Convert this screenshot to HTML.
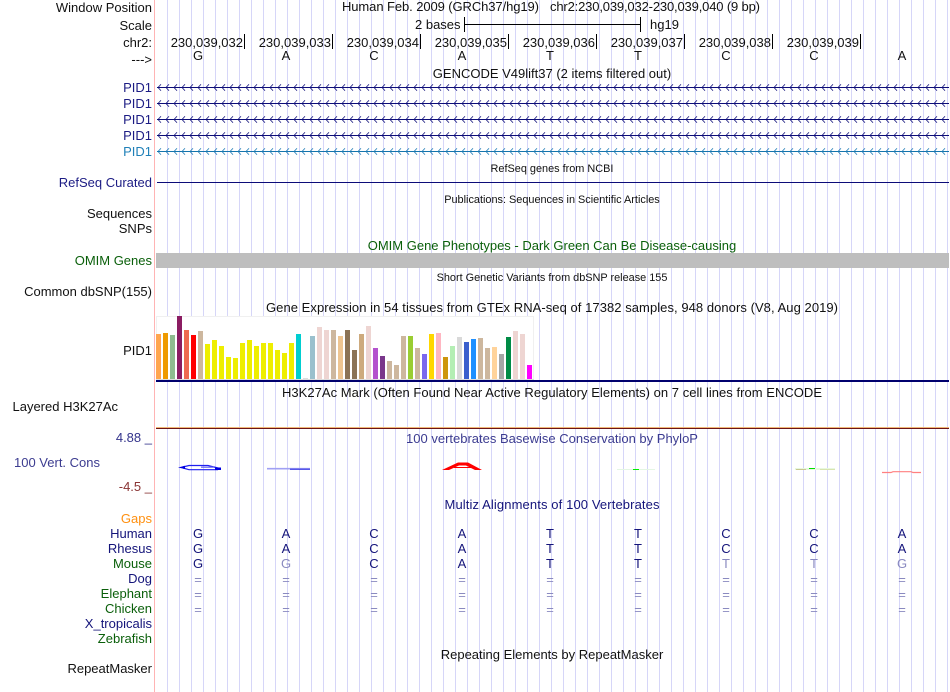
<!DOCTYPE html>
<html><head><meta charset="utf-8"><style>
html,body{margin:0;padding:0;background:#fff;width:950px;height:692px;overflow:hidden}
svg{display:block;font-family:"Liberation Sans",sans-serif;font-size:13px}
.r{text-anchor:end}.m{text-anchor:middle}.s{font-size:10.9px}
.n{fill:#14147a}.g{fill:#0a5f0a}.k{fill:#111}.f{fill:#8a8ac0}
</style></head><body>
<svg width="950" height="692" viewBox="0 0 950 692" xmlns="http://www.w3.org/2000/svg">
<defs>
<pattern id="chev" x="157" y="84" width="8" height="7" patternUnits="userSpaceOnUse"><path d="M4,0.3 L1,3.5 L4,6.7" fill="none" stroke="#0c0c78" stroke-width="0.85" opacity="0.9"/></pattern>
<pattern id="chev2" x="157" y="148" width="8" height="7" patternUnits="userSpaceOnUse"><path d="M4,0.3 L1,3.5 L4,6.7" fill="none" stroke="#1878b4" stroke-width="0.85" opacity="0.9"/></pattern>
</defs>
<path d="M167,346H948" stroke="#d6d6f8" stroke-width="692" stroke-dasharray="1 11" fill="none" shape-rendering="crispEdges"/>
<rect x="154" y="0" width="1" height="692" fill="#ffb4b4"/>

<!-- header -->
<g class="k">
<text x="152" y="12" class="r">Window Position</text>
<text x="152" y="30" class="r">Scale</text>
<text x="152" y="47" class="r">chr2:</text>
<text x="152" y="64" class="r">---&gt;</text>
<text x="342" y="11" textLength="197">Human Feb. 2009 (GRCh37/hg19)</text>
<text x="550" y="11" textLength="210">chr2:230,039,032-230,039,040 (9 bp)</text>
<text x="415" y="29">2 bases</text>
<text x="650" y="29">hg19</text>
<text x="243" y="47" class="r">230,039,032</text>
<text x="331" y="47" class="r">230,039,033</text>
<text x="419" y="47" class="r">230,039,034</text>
<text x="507" y="47" class="r">230,039,035</text>
<text x="595" y="47" class="r">230,039,036</text>
<text x="683" y="47" class="r">230,039,037</text>
<text x="771" y="47" class="r">230,039,038</text>
<text x="859" y="47" class="r">230,039,039</text>
<text x="198" y="60" class="m">G</text><text x="286" y="60" class="m">A</text><text x="374" y="60" class="m">C</text><text x="462" y="60" class="m">A</text><text x="550" y="60" class="m">T</text><text x="638" y="60" class="m">T</text><text x="726" y="60" class="m">C</text><text x="814" y="60" class="m">C</text><text x="902" y="60" class="m">A</text>
<text x="552" y="78" class="m">GENCODE V49lift37 (2 items filtered out)</text>
</g>
<g fill="#000" shape-rendering="crispEdges">
<rect x="464" y="17" width="1" height="15"/><rect x="465" y="24" width="175" height="1"/><rect x="640" y="17" width="1" height="15"/>
<rect x="244" y="34" width="1" height="15"/><rect x="332" y="34" width="1" height="15"/><rect x="420" y="34" width="1" height="15"/><rect x="508" y="34" width="1" height="15"/><rect x="596" y="34" width="1" height="15"/><rect x="684" y="34" width="1" height="15"/><rect x="772" y="34" width="1" height="15"/><rect x="860" y="34" width="1" height="15"/>
</g>

<!-- genes -->
<text x="152" y="92" class="r" fill="#1c1c84">PID1</text>
<text x="152" y="108" class="r" fill="#1c1c84">PID1</text>
<text x="152" y="124" class="r" fill="#1c1c84">PID1</text>
<text x="152" y="140" class="r" fill="#1c1c84">PID1</text>
<text x="152" y="156" class="r" fill="#2080b8">PID1</text>
<g fill="#0c0c78" shape-rendering="crispEdges"><rect x="157" y="87" width="792" height="1"/><rect x="157" y="103" width="792" height="1"/><rect x="157" y="119" width="792" height="1"/><rect x="157" y="135" width="792" height="1"/></g>
<rect x="157" y="151" width="792" height="1" fill="#1474ac" shape-rendering="crispEdges"/>
<rect x="157" y="84" width="792" height="7" fill="url(#chev)"/>
<g transform="translate(0,16)"><rect x="157" y="84" width="792" height="7" fill="url(#chev)"/></g>
<g transform="translate(0,32)"><rect x="157" y="84" width="792" height="7" fill="url(#chev)"/></g>
<g transform="translate(0,48)"><rect x="157" y="84" width="792" height="7" fill="url(#chev)"/></g>
<rect x="157" y="148" width="792" height="7" fill="url(#chev2)"/>

<!-- mid -->
<text x="552" y="172" class="m s k">RefSeq genes from NCBI</text>
<text x="152" y="187" class="r" fill="#1c1c84">RefSeq Curated</text>
<rect x="157" y="182" width="792" height="1" fill="#0c0c78" shape-rendering="crispEdges"/>
<text x="552" y="203" class="m s k">Publications: Sequences in Scientific Articles</text>
<text x="152" y="218" class="r k">Sequences</text>
<text x="152" y="233" class="r k">SNPs</text>
<text x="552" y="250" class="m" fill="#0a5f0a">OMIM Gene Phenotypes - Dark Green Can Be Disease-causing</text>
<text x="152" y="265" class="r g">OMIM Genes</text>
<rect x="156" y="253" width="793" height="15" fill="#bebebe"/>
<text x="552" y="281" class="m s k">Short Genetic Variants from dbSNP release 155</text>
<text x="152" y="296" class="r k">Common dbSNP(155)</text>
<text x="552" y="312" class="m k" textLength="572">Gene Expression in 54 tissues from GTEx RNA-seq of 17382 samples, 948 donors (V8, Aug 2019)</text>
<text x="152" y="355" class="r k">PID1</text>

<!-- GTEx -->
<rect x="156" y="316" width="378" height="64" fill="#fff"/>
<path d="M156.5,380V316.5H533.5V380" fill="none" stroke="#f0f0f0"/>
<g shape-rendering="crispEdges">
<rect x="156" y="334" width="5" height="45" fill="#FFA54F"/><rect x="163" y="333" width="5" height="46" fill="#EE9A00"/><rect x="170" y="335" width="5" height="44" fill="#8FBC8F"/><rect x="177" y="316" width="5" height="63" fill="#8B1C62"/><rect x="184" y="330" width="5" height="49" fill="#EE6A50"/><rect x="191" y="335" width="5" height="44" fill="#FF0000"/><rect x="198" y="331" width="5" height="48" fill="#CDB79E"/>
<g fill="#EEEE00"><rect x="205" y="344" width="5" height="35"/><rect x="212" y="340" width="5" height="39"/><rect x="219" y="346" width="5" height="33"/><rect x="226" y="357" width="5" height="22"/><rect x="233" y="358" width="5" height="21"/><rect x="240" y="343" width="5" height="36"/><rect x="247" y="340" width="5" height="39"/><rect x="254" y="346" width="5" height="33"/><rect x="261" y="343" width="5" height="36"/><rect x="268" y="343" width="5" height="36"/><rect x="275" y="350" width="5" height="29"/><rect x="282" y="353" width="5" height="26"/><rect x="289" y="343" width="5" height="36"/></g>
<rect x="296" y="334" width="5" height="45" fill="#00CED1"/>
<rect x="303" y="378" width="5" height="1" fill="#dddddd"/>
<rect x="310" y="336" width="5" height="43" fill="#9AC0CD"/><rect x="317" y="327" width="5" height="52" fill="#EED5D2"/><rect x="324" y="330" width="5" height="49" fill="#EED5D2"/><rect x="331" y="330" width="5" height="49" fill="#CDB79E"/><rect x="338" y="336" width="5" height="43" fill="#EEC591"/><rect x="345" y="330" width="5" height="49" fill="#8B7355"/><rect x="352" y="350" width="5" height="29" fill="#8B7355"/><rect x="359" y="334" width="5" height="45" fill="#CDAA7D"/><rect x="366" y="326" width="5" height="53" fill="#EED5D2"/><rect x="373" y="348" width="5" height="31" fill="#B452CD"/><rect x="380" y="356" width="5" height="23" fill="#7A378B"/><rect x="387" y="361" width="5" height="18" fill="#CDB79E"/><rect x="394" y="365" width="5" height="14" fill="#CDB79E"/><rect x="401" y="336" width="5" height="43" fill="#CDB79E"/><rect x="408" y="336" width="5" height="43" fill="#9ACD32"/><rect x="415" y="348" width="5" height="31" fill="#CDB79E"/><rect x="422" y="354" width="5" height="25" fill="#7B68EE"/><rect x="429" y="334" width="5" height="45" fill="#FFD700"/><rect x="436" y="333" width="5" height="46" fill="#FFB6C1"/><rect x="443" y="357" width="5" height="22" fill="#CD950C"/><rect x="450" y="346" width="5" height="33" fill="#B4EEB4"/><rect x="457" y="337" width="5" height="42" fill="#D9D9D9"/><rect x="464" y="342" width="5" height="37" fill="#3A5FCD"/><rect x="471" y="339" width="5" height="40" fill="#1E90FF"/><rect x="478" y="338" width="5" height="41" fill="#CDB79E"/><rect x="485" y="348" width="5" height="31" fill="#CDB79E"/><rect x="492" y="347" width="5" height="32" fill="#FFD39B"/><rect x="499" y="354" width="5" height="25" fill="#A6A6A6"/><rect x="506" y="337" width="5" height="42" fill="#008B45"/><rect x="513" y="331" width="5" height="48" fill="#EED5D2"/><rect x="520" y="334" width="5" height="45" fill="#EED5D2"/><rect x="527" y="365" width="5" height="14" fill="#FF00FF"/>
<rect x="156" y="379" width="378" height="1" fill="#dddddd"/>
<rect x="156" y="380" width="793" height="2" fill="#00006e"/>
</g>

<!-- H3K27Ac -->
<text x="552" y="397" class="m k" textLength="540">H3K27Ac Mark (Often Found Near Active Regulatory Elements) on 7 cell lines from ENCODE</text>
<text x="118" y="411" class="r k">Layered H3K27Ac</text>
<rect x="156" y="427" width="793" height="1" fill="#f0b878" shape-rendering="crispEdges"/>
<rect x="156" y="428" width="793" height="1" fill="#6e1414" shape-rendering="crispEdges"/>

<!-- conservation -->
<text x="552" y="443" class="m" fill="#3c3c90">100 vertebrates Basewise Conservation by PhyloP</text>
<text x="152" y="442" class="r" fill="#34348c">4.88 _</text>
<text x="14" y="467" fill="#3c3c90">100 Vert. Cons</text>
<text x="152" y="491" class="r" fill="#8a3434">-4.5 _</text>

<path d="M183,467 L189,465.5 H208 L220,468.5 M183,468 L189,469.7 H218" fill="none" stroke="#2020f0" stroke-width="1.2"/>
<path d="M201,467.2 H214" fill="none" stroke="#6868f4" stroke-width="1.2"/>
<path d="M178,467.5 L185,465.8 V469 Z" fill="#0000e0"/>
<rect x="215" y="467.5" width="6" height="2.5" fill="#0000e0"/>
<path d="M267,468.7 H310" stroke="#a0a0f4" stroke-width="1.6" fill="none"/>
<path d="M290,469.2 H310" stroke="#2020e0" stroke-width="1" fill="none"/>
<path d="M442,470 L458,462.5 H468 L482,470 H475 L466,465.5 H459 L449,470 Z" fill="#ff0000"/>
<path d="M454,467.5 H471" stroke="#ff0000" stroke-width="1" fill="none"/>
<rect x="617" y="469" width="38" height="1" fill="#e4f6e4"/>
<rect x="633" y="469" width="6" height="1" fill="#00ee00"/>
<rect x="795" y="468" width="40" height="2" fill="#e8f8e0"/>
<rect x="796" y="469" width="10" height="1" fill="#c8c890"/>
<rect x="820" y="469" width="15" height="1" fill="#d8e4b0"/>
<rect x="809" y="468" width="6" height="1" fill="#00e000"/>
<path d="M882,472.5 H891 L893,471.7 H911 L913,472.5 H921" stroke="#ff8080" stroke-width="1.2" fill="none"/>

<!-- multiz -->
<text x="552" y="509" class="m" fill="#14147a" textLength="215">Multiz Alignments of 100 Vertebrates</text>
<text x="152" y="523" class="r" fill="#ff9010">Gaps</text>
<text x="152" y="538" class="r n">Human</text>
<text x="152" y="553" class="r n">Rhesus</text>
<text x="152" y="568" class="r g">Mouse</text>
<text x="152" y="583" class="r n">Dog</text>
<text x="152" y="598" class="r g">Elephant</text>
<text x="152" y="613" class="r g">Chicken</text>
<text x="152" y="628" class="r n">X_tropicalis</text>
<text x="152" y="643" class="r g">Zebrafish</text>
<text x="152" y="673" class="r k">RepeatMasker</text>
<text x="552" y="659" class="m k">Repeating Elements by RepeatMasker</text>

<g class="n">
<text x="198" y="538" class="m">G</text><text x="286" y="538" class="m">A</text><text x="374" y="538" class="m">C</text><text x="462" y="538" class="m">A</text><text x="550" y="538" class="m">T</text><text x="638" y="538" class="m">T</text><text x="726" y="538" class="m">C</text><text x="814" y="538" class="m">C</text><text x="902" y="538" class="m">A</text>
<text x="198" y="553" class="m">G</text><text x="286" y="553" class="m">A</text><text x="374" y="553" class="m">C</text><text x="462" y="553" class="m">A</text><text x="550" y="553" class="m">T</text><text x="638" y="553" class="m">T</text><text x="726" y="553" class="m">C</text><text x="814" y="553" class="m">C</text><text x="902" y="553" class="m">A</text>
<text x="198" y="568" class="m">G</text><text x="374" y="568" class="m">C</text><text x="462" y="568" class="m">A</text><text x="550" y="568" class="m">T</text><text x="638" y="568" class="m">T</text>
</g>
<g class="f">
<text x="286" y="568" class="m">G</text><text x="726" y="568" class="m">T</text><text x="814" y="568" class="m">T</text><text x="902" y="568" class="m">G</text>
<text x="198" y="584" class="m">=</text><text x="286" y="584" class="m">=</text><text x="374" y="584" class="m">=</text><text x="462" y="584" class="m">=</text><text x="550" y="584" class="m">=</text><text x="638" y="584" class="m">=</text><text x="726" y="584" class="m">=</text><text x="814" y="584" class="m">=</text><text x="902" y="584" class="m">=</text>
<text x="198" y="599" class="m">=</text><text x="286" y="599" class="m">=</text><text x="374" y="599" class="m">=</text><text x="462" y="599" class="m">=</text><text x="550" y="599" class="m">=</text><text x="638" y="599" class="m">=</text><text x="726" y="599" class="m">=</text><text x="814" y="599" class="m">=</text><text x="902" y="599" class="m">=</text>
<text x="198" y="614" class="m">=</text><text x="286" y="614" class="m">=</text><text x="374" y="614" class="m">=</text><text x="462" y="614" class="m">=</text><text x="550" y="614" class="m">=</text><text x="638" y="614" class="m">=</text><text x="726" y="614" class="m">=</text><text x="814" y="614" class="m">=</text><text x="902" y="614" class="m">=</text>
</g>
</svg>
</body></html>
